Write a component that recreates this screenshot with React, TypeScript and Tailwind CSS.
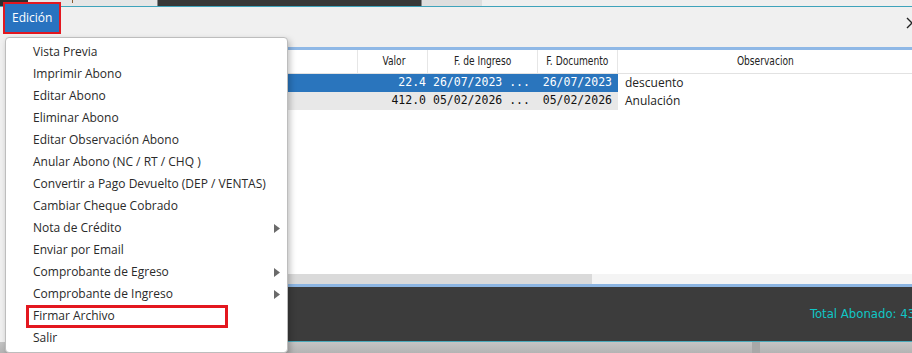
import React from "react";

const MENU_ITEMS = [
  { label: "Vista Previa" },
  { label: "Imprimir Abono" },
  { label: "Editar Abono" },
  { label: "Eliminar Abono" },
  { label: "Editar Observación Abono" },
  { label: "Anular Abono (NC / RT / CHQ )" },
  { label: "Convertir a Pago Devuelto (DEP / VENTAS)" },
  { label: "Cambiar Cheque Cobrado" },
  { label: "Nota de Crédito", sub: true },
  { label: "Enviar por Email" },
  { label: "Comprobante de Egreso", sub: true },
  { label: "Comprobante de Ingreso", sub: true },
  { label: "Firmar Archivo", marked: true },
  { label: "Salir" },
];

const ROWS = [
  { valor: "22.4", ingreso: "26/07/2023 ...", doc: "26/07/2023", obs: "descuento", selected: true },
  { valor: "412.0", ingreso: "05/02/2026 ...", doc: "05/02/2026", obs: "Anulación", selected: false },
];

const ui = { fontFamily: '"Open Sans", "DejaVu Sans", sans-serif' };
const narrow = { fontFamily: '"Liberation Sans Narrow", "DejaVu Sans Condensed", "Liberation Sans", sans-serif' };
const mono = { fontFamily: '"DejaVu Sans Mono", "Liberation Mono", monospace' };

export default function App() {
  return (
    <div className="relative flex h-[353px] w-[912px] flex-col overflow-hidden bg-[#f0f0f0]" style={ui}>
      {/* window strip behind */}
      <div className="flex h-[6px] shrink-0">
        <div className="w-[28px] bg-[#2e2e2e]" />
        <div className="relative w-[129px] bg-[#e6e6e6]">
          <span className="absolute left-[44px] top-0 h-[3px] w-px bg-[#8a5a30]" />
        </div>
        <div className="w-[265px] border-x border-[#888] bg-[#383838]" />
        <div className="w-[60px] bg-[#dedede]" />
        <div className="flex-1 bg-[#efefef]" />
      </div>
      <div className="h-px shrink-0 bg-[#3fa3bb]" />

      {/* toolbar */}
      <div className="flex h-[40px] shrink-0 items-start justify-end bg-[#f0f0f0]">
        <svg width="8" height="12" viewBox="0 0 8 12" className="mr-[-2px] mt-[10px]">
          <path d="M1 1 L6 6 L1 11" stroke="#222" strokeWidth="1.4" fill="none" />
        </svg>
      </div>

      {/* table */}
      <div className="ml-[5px] flex h-[237px] shrink-0 flex-col bg-white">
        <div className="h-[3px] bg-[#8fb8e6]" />
        <div className="flex h-[24px] border-b border-[#e2e2e2] text-[11.5px] text-[#222]" style={narrow}>
          <div className="w-[353px] border-r border-[#e6e6e6]" />
          <div className="flex w-[70px] items-center justify-end border-r border-[#e6e6e6] pr-[20px]">
            <span className="inline-block scale-x-[0.88]">Valor</span>
          </div>
          <div className="flex w-[110px] items-center justify-center border-r border-[#e6e6e6]">
            <span className="inline-block scale-x-[0.88]">F. de Ingreso</span>
          </div>
          <div className="flex w-[80px] items-center justify-center border-r border-[#e6e6e6]">
            <span className="inline-block scale-x-[0.88]">F. Documento</span>
          </div>
          <div className="flex flex-1 items-center justify-center">
            <span className="inline-block scale-x-[0.88]">Observacion</span>
          </div>
        </div>
        {ROWS.map((r) => (
          <div key={r.valor} className="flex h-[18px] text-[11.5px]">
            <div
              className={
                "flex w-[613px] items-center " +
                (r.selected ? "bg-[#2a75bd] text-white" : "bg-[#e8e8e8] text-[#111]")
              }
              style={mono}
            >
              <span className="w-[421px] text-right">{r.valor}</span>
              <span className="ml-[7px] w-[106px] whitespace-pre">{r.ingreso}</span>
              <span className="w-[73px] text-right">{r.doc}</span>
            </div>
            <div className="flex flex-1 items-center pl-[7px] text-[12px] text-[#222]">{r.obs}</div>
          </div>
        ))}
        <div className="flex-1" />
        <div className="flex h-[10px] bg-[#f4f4f4]">
          <div className="w-[587px] bg-[#dadada]" />
        </div>
      </div>

      {/* footer */}
      <div className="ml-[5px] h-[3px] shrink-0 bg-[#8cb5e2]" />
      <div className="ml-[5px] flex h-[54px] shrink-0 items-center bg-[#3c3c3c] pl-[805px]">
        <span className="whitespace-nowrap text-[13px] text-[#10c6c6]" style={narrow}>
          Total Abonado: 434
        </span>
      </div>
      <div className="ml-[5px] h-px shrink-0 bg-[#4aa9ba]" />
      <div className="flex flex-1 bg-gradient-to-b from-[#c4c4c4] to-[#b4b4b4]">
        <div className="ml-[752px] w-[8px] bg-[#a8a8a8]" />
      </div>

      {/* Edición button */}
      <div className="absolute left-[3px] top-[2px] border-[2px] border-[#e3171f]">
        <div className="flex h-[28px] w-[54px] items-center bg-[#2873c0] pl-[7px] text-[12px] text-white">
          Edición
        </div>
      </div>

      {/* dropdown menu */}
      <div className="absolute left-[5px] top-[37px] w-[283px] rounded-[4px] border border-[#bdbdbd] bg-white py-[3px] shadow-[2px_3px_6px_rgba(0,0,0,0.25)]">
        {MENU_ITEMS.map((it) => (
          <div key={it.label} className="relative flex h-[22px] items-center pl-[27px] pr-[8px] text-[12px] text-[#2a2a2a]">
            <span>{it.label}</span>
            {it.sub && (
              <svg width="6" height="9" viewBox="0 0 6 9" className="absolute right-[7px]">
                <path d="M0 0 L6 4.5 L0 9 Z" fill="#6a6a6a" />
              </svg>
            )}
            {it.marked && (
              <span className="absolute left-[20px] top-0 h-[23px] w-[202px] border-[3px] border-[#e3171f]" />
            )}
          </div>
        ))}
      </div>
    </div>
  );
}
